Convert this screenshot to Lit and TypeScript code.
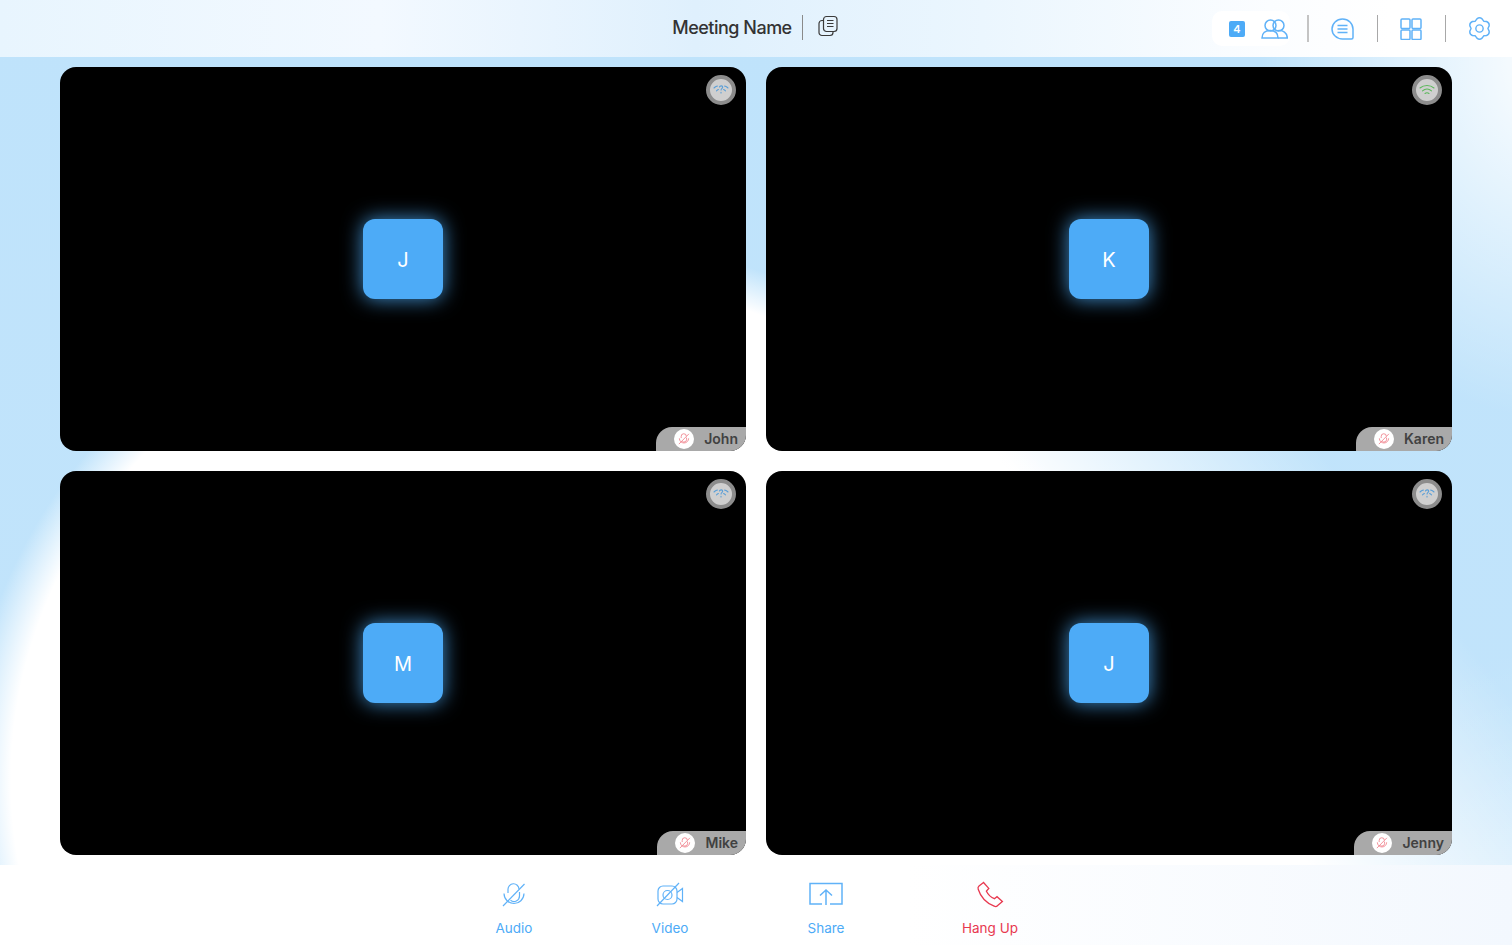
import { LitElement, html, css, svg } from 'lit';
import { customElement, property } from 'lit/decorators.js';

const micOff = svg`
  <path d="M9 13V9.500a5.500 5.500 0 0 1 11-.5M20.500 12v4a5.500 5.500 0 0 1-9 4.200" />
  <path d="M5 13.500c.2 6 4.600 10 10 10 5.200 0 9.800-4 10-10" />
  <path d="M4 26 25.500 4" />`;

const wifiOk = svg`
  <path d="M4 9c4-3.400 10-3.400 14 0" />
  <path d="M6.500 11.800c2.600-2.200 6.400-2.200 9 0" />
  <path d="M9 14.500c1.300-1 2.700-1 4 0" />`;

const wifiUnknown = svg`
  <path d="M4 9c1-.9 2.200-1.500 3.400-1.900M14.600 7.100c1.200.4 2.400 1 3.400 1.900" />
  <path d="M6.500 11.800c.6-.5 1.200-.9 1.900-1.200M13.600 10.600c.7.3 1.300.7 1.900 1.200" />
  <path d="M9.500 8c.4-1.500 3.200-1.500 3.200.2 0 1.200-1.600 1.200-1.600 2.800M11 13.200v.8" />`;

// six rounded lobes around the centre of a 24 box
function gearPath() {
  const at = (deg: number, r: number) => {
    const a = (deg * Math.PI) / 180;
    return `${(12 + r * Math.cos(a)).toFixed(2)} ${(12 + r * Math.sin(a)).toFixed(2)}`;
  };
  let d = `M${at(-120, 8.8)}`;
  for (let i = 0; i < 6; i++) {
    const a = -90 + i * 60;
    d += `L${at(a - 15, 10.4)}Q${at(a, 12.2)} ${at(a + 15, 10.4)}L${at(a + 30, 8.8)}`;
  }
  return d + 'Z';
}

@customElement('video-tile')
export class VideoTile extends LitElement {
  static styles = css`
    :host {
      position: relative;
      background: #000;
      border-radius: 16px;
      overflow: hidden;
      font-family: Inter, 'Liberation Sans', sans-serif;
      display: flex;
      align-items: center;
      justify-content: center;
    }
    .avatar {
      width: 80px;
      height: 80px;
      box-sizing: border-box;
      padding-top: 1px;
      border-radius: 12px;
      background: #4dabf7;
      box-shadow: 0 0 20px rgba(77, 171, 247, 0.85);
      color: #fff;
      font-size: 20px;
      display: flex;
      align-items: center;
      justify-content: center;
    }
    .signal {
      position: absolute;
      top: 8px;
      right: 10px;
      width: 22px;
      height: 22px;
      border: 4px solid #8c8c8c;
      border-radius: 50%;
      background: #cfcfcf;
    }
    .signal svg {
      display: block;
      fill: none;
      stroke-width: 1.100;
      stroke-linecap: round;
    }
    .signal.ok svg { stroke: #5cb85c; }
    .signal.unknown svg { stroke: #5a9fd8; }
    .tag {
      position: absolute;
      right: 0;
      bottom: 0;
      height: 24px;
      box-sizing: border-box;
      padding: 0 8px 2px 18px;
      display: flex;
      align-items: center;
      gap: 10px;
      background: #a9a9a9;
      border-radius: 16px 0 0 0;
      color: #414141;
      font-size: 14px;
      font-weight: 600;
    }
    .mute {
      width: 20px;
      height: 20px;
      margin-bottom: -2px;
      border-radius: 50%;
      background: #fff;
      display: flex;
      align-items: center;
      justify-content: center;
    }
    .mute svg {
      fill: none;
      stroke: #ee6f7c;
      stroke-width: 1.600;
    }
  `;

  @property() name = '';
  @property() initial = '';
  @property() signal = 'unknown';

  render() {
    return html`
      <div class="avatar">${this.initial}</div>
      <div class="signal ${this.signal}">
        <svg width="22" height="22" viewBox="0 0 22 22">
          ${this.signal === 'ok' ? wifiOk : wifiUnknown}
        </svg>
      </div>
      <div class="tag">
        <span class="mute">
          <svg width="14" height="14" viewBox="0 0 30 30">${micOff}</svg>
        </span>
        <span>${this.name}</span>
      </div>
    `;
  }
}

@customElement('app-root')
export class AppRoot extends LitElement {
  static styles = css`
    :host {
      display: flex;
      flex-direction: column;
      width: 1512px;
      height: 945px;
      overflow: hidden;
      font-family: Inter, 'Liberation Sans', sans-serif;
      background:
        radial-gradient(ellipse 572px 520px at 560px 780px, #ffffff 0%, #ffffff 96%, rgba(255, 255, 255, 0) 104%),
        linear-gradient(52.600deg, #ffffff 45.700%, rgba(255, 255, 255, 0) 77.700%) 900px 400px / 612px 545px no-repeat,
        radial-gradient(ellipse 300px 360px at 1560px 60px, #ffffff 0%, rgba(255, 255, 255, 0) 100%),
        radial-gradient(ellipse 300px 300px at 1560px 945px, rgba(255, 255, 255, 0.3) 0%, rgba(255, 255, 255, 0) 100%),
        linear-gradient(180deg, #bfe3fb 0%, #c2e4fb 100%);
    }
    svg {
      display: block;
      fill: none;
    }
    .header {
      height: 57px;
      flex: none;
      display: grid;
      grid-template-columns: 1fr auto 1fr;
      align-items: center;
      background: linear-gradient(90deg, #e8f5fe 0%, #f3f9ff 25%, #dff0fd 46%, #ebf6fe 65%, #fbfdff 84%, #ffffff 92%);
    }
    .title {
      grid-column: 2;
      display: flex;
      align-items: center;
      color: #333;
      font-size: 18px;
      font-weight: 500;
      padding: 0 2px 2px 0;
    }
    .title .name {
      padding-right: 10px;
      border-right: 1px solid #8a8a8a;
      line-height: 25px;
      letter-spacing: -0.500px;
    }
    .title svg {
      margin-left: 15px;
      margin-top: -3px;
      stroke: #3a3a3a;
      stroke-width: 1.200;
    }
    .tools {
      grid-column: 3;
      justify-self: end;
      display: flex;
      align-items: center;
      padding-right: 21px;
    }
    .people {
      display: flex;
      align-items: center;
      gap: 16px;
      height: 35px;
      padding: 0 2px 0 17px;
      background: #fff;
      border-radius: 10px;
    }
    .badge {
      width: 16px;
      height: 16px;
      border-radius: 2px;
      background: #4dabf7;
      color: #fff;
      font-size: 11px;
      font-weight: 600;
      text-align: center;
      line-height: 16px;
    }
    .tools svg {
      stroke: #60b2f8;
      stroke-width: 1.500;
    }
    .sep {
      width: 1px;
      height: 27px;
      background: #a8a8a8;
      margin: 0 22.500px;
    }
    .sep.first {
      width: 2px;
      background: #c4c4c4;
      margin: 0 22px 0 17px;
    }
    .grid {
      flex: 1;
      display: grid;
      grid-template-columns: 1fr 1fr;
      grid-template-rows: 1fr 1fr;
      gap: 20px;
      padding: 10px 60px;
      min-height: 0;
    }
    .bar {
      height: 80px;
      flex: none;
      box-sizing: border-box;
      padding-right: 8px;
      display: flex;
      justify-content: center;
      background: linear-gradient(90deg, #ffffff 60%, #f3f8fe 100%);
    }
    .action {
      width: 156px;
      display: flex;
      flex-direction: column;
      align-items: center;
      padding-top: 15px;
      color: #4dabf7;
      font-size: 13.500px;
    }
    .action svg {
      stroke: #60b2f8;
      stroke-width: 1.200;
      margin-bottom: 10px;
    }
    .action.end {
      margin-left: 8px;
      color: #e8384f;
    }
    .action.end svg {
      stroke: #e8384f;
      stroke-width: 1.300;
    }
  `;

  render() {
    return html`
      <div class="header">
        <div class="title">
          <span class="name">Meeting Name</span>
          <svg width="20" height="22" viewBox="0 0 20 22">
            <rect x="1" y="5.500" width="14" height="15" rx="3" />
            <rect x="5.500" y="1.500" width="13.500" height="15" rx="3" fill="#e6f3fd" />
            <path d="M9 5.500h6.500M9 8.500h6.500M9 11.500h6.500" />
          </svg>
        </div>
        <div class="tools">
          <div class="people">
            <span class="badge">4</span>
            <svg width="27" height="20" viewBox="0 0 27 20">
              <circle cx="9.500" cy="6.500" r="5.500" />
              <circle cx="17.500" cy="6.500" r="5.500" />
              <path d="M1 19c0-5 3.500-7.500 8-7.500 4.800 0 8 2.500 8 7.500z" />
              <path d="M16.500 11.800c5.500-1 9.800 2 9.800 7.200H17" />
            </svg>
          </div>
          <span class="sep first"></span>
          <svg width="23" height="22" viewBox="0 0 23 22">
            <path d="M11.500 1C17.500 1 22 5.500 22 11v8.500a1.500 1.500 0 0 1-1.500 1.500h-9C5.700 21 1 16.500 1 11S5.700 1 11.500 1z" />
            <path d="M6.500 7.500h10M6.500 11h10M6.500 14.500h10" />
          </svg>
          <span class="sep"></span>
          <svg width="22" height="22" viewBox="0 0 22 22">
            <rect x="1" y="1" width="9" height="9.500" rx="1" />
            <rect x="12" y="1" width="9" height="9.500" rx="1" />
            <rect x="1" y="12" width="9" height="9.500" rx="1" />
            <rect x="12" y="12" width="9" height="9.500" rx="1" />
          </svg>
          <span class="sep"></span>
          <svg width="23" height="23" viewBox="0 0 24 24">
            <circle cx="12" cy="12" r="3.800" />
            <path d=${gearPath()} stroke-linejoin="round" />
          </svg>
        </div>
      </div>

      <div class="grid">
        <video-tile name="John" initial="J"></video-tile>
        <video-tile name="Karen" initial="K" signal="ok"></video-tile>
        <video-tile name="Mike" initial="M"></video-tile>
        <video-tile name="Jenny" initial="J"></video-tile>
      </div>

      <div class="bar">
        <div class="action">
          <svg width="30" height="30" viewBox="0 0 30 30">${micOff}</svg>
          Audio
        </div>
        <div class="action">
          <svg width="30" height="30" viewBox="0 0 30 30">
            <rect x="3" y="6" width="19" height="18" rx="5" />
            <circle cx="12.500" cy="15" r="4.500" />
            <path d="M22 12.500 27.500 8.500v13L22 17.500" />
            <path d="M2 26 24 3" />
          </svg>
          Video
        </div>
        <div class="action">
          <svg width="34" height="30" viewBox="0 0 34 30">
            <path d="M13 24H1V3.500h32V24H21" stroke-width="1.500" />
            <path d="M17 25V10M11 15.500 17 10l6 5.500" stroke-width="1.500" />
          </svg>
          Share
        </div>
        <div class="action end">
          <svg width="30" height="30" viewBox="0 0 30 30">
            <path d="M8.500 2.500 4 6c-1 .8-1.200 2-.8 3.200 2.400 7.600 8.600 14 16 17 1.200.5 2.300.6 3.200-.4l5-4.300-5.400-4.800-2.600 2c-3-1.200-6.400-4.400-8-7.500l2.400-2.800z" />
          </svg>
          Hang Up
        </div>
      </div>
    `;
  }
}
